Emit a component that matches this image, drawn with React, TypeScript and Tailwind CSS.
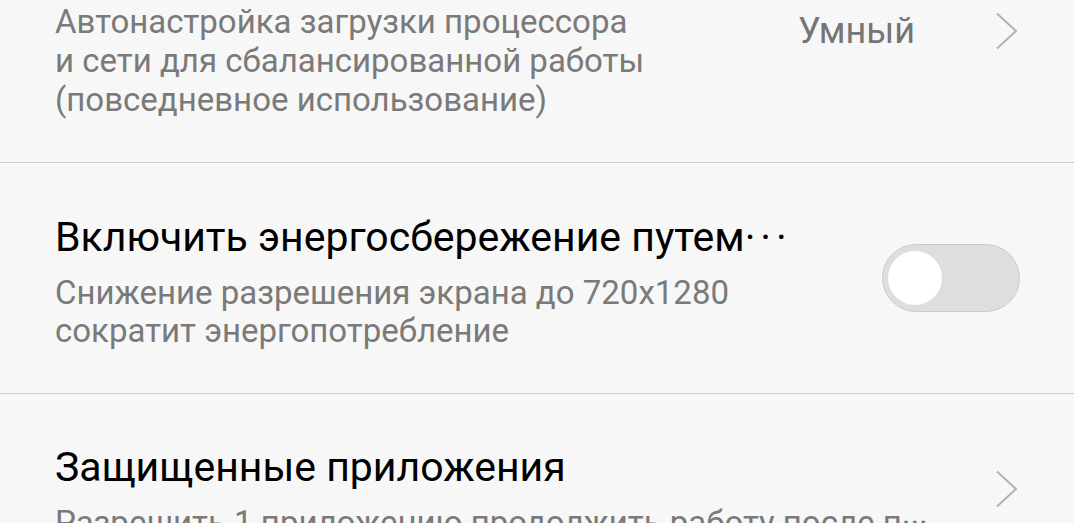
import React from 'react';

// Settings list fragment: power mode row, resolution power saving toggle, protected apps.
function Chevron({ className = '' }: { className?: string }) {
  return (
    <svg width="24" height="38" viewBox="0 0 24 38" className={className} fill="none">
      <path d="M2 1.5 L21 19 L2 36.5" stroke="#b3b3b3" strokeWidth="2" />
    </svg>
  );
}

function Toggle() {
  return (
    <div className="flex h-[68px] w-[138px] items-center rounded-full border border-[#cbcbcb] bg-[#dedede] px-[5px]">
      <div className="h-[54px] w-[54px] rounded-full bg-white" />
    </div>
  );
}

export default function App() {
  return (
    <div className="h-[523px] w-[1074px] overflow-hidden bg-[#f7f7f7] font-['Roboto',sans-serif]">
      {/* row 1: tail of the power mode item */}
      <div className="flex h-[163px] items-start justify-between border-b border-[#cccccc] pl-[55px] pr-[55px] pt-[2px]">
        <p className="text-[33px] leading-[39px] text-[#7a7a7a]">
          Автонастройка загрузки процессора
          <br />
          и сети для сбалансированной работы
          <br />
          (повседневное использование)
        </p>
        <div className="flex items-center gap-[80px] pt-[9px]">
          <span className="text-[36px] leading-[40px] text-[#757575]">Умный</span>
          <Chevron />
        </div>
      </div>

      {/* row 2: resolution power saving */}
      <div className="flex h-[231px] items-start justify-between border-b border-[#cccccc] pl-[55px] pr-[54px] pt-[50px]">
        <div className="flex flex-col">
          <span className="text-[41px] leading-[48px] text-black">
            Включить энергосбережение путем<span className="tracking-[5px]">···</span>
          </span>
          <span className="mt-[13px] text-[33px] leading-[38px] text-[#7a7a7a]">
            Снижение разрешения экрана до 720x1280
            <br />
            сократит энергопотребление
          </span>
        </div>
        <div className="mt-[31px]">
          <Toggle />
        </div>
      </div>

      {/* row 3: protected apps */}
      <div className="flex items-start justify-between pl-[55px] pr-[55px] pt-[49px]">
        <div className="flex flex-col">
          <span className="whitespace-nowrap text-[41px] leading-[48px] text-black">Защищенные приложения</span>
          <span className="mt-[13px] whitespace-nowrap text-[33px] leading-[38px] text-[#7a7a7a]">
            Разрешить 1 приложению продолжить работу после п···
          </span>
        </div>
        <Chevron className="mt-[27px]" />
      </div>
    </div>
  );
}
